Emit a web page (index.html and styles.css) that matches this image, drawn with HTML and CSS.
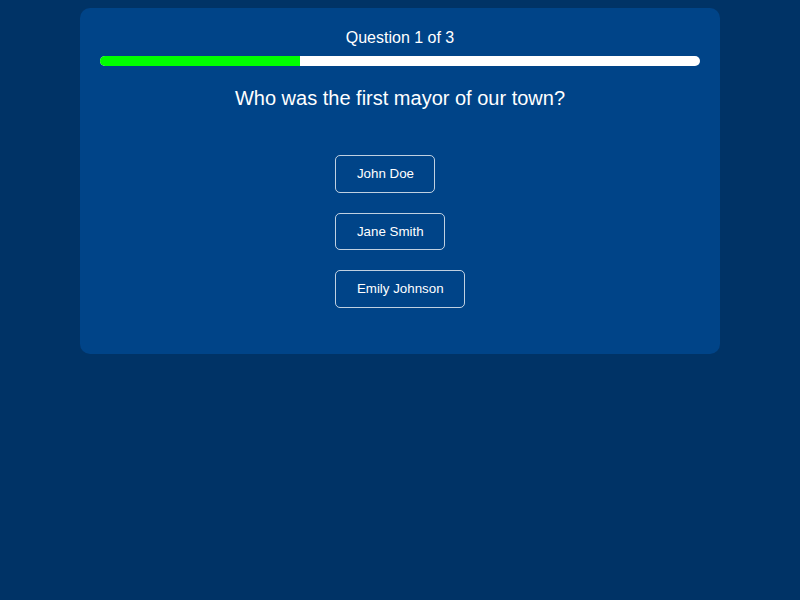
FILE: index.html
```html
<!DOCTYPE html>
<html lang="en">
<head>
<meta charset="utf-8">
<title>Town Quiz</title>
<link rel="stylesheet" href="styles.css">
</head>
<body>
<main class="quiz">
  <div class="counter">Question 1 of 3</div>
  <div class="progress"><div class="progress-fill" style="width: 33.333%"></div></div>
  <h2 class="question">Who was the first mayor of our town?</h2>
  <div class="options-wrap">
    <div class="options">
      <button class="option">John Doe</button>
      <button class="option">Jane Smith</button>
      <button class="option">Emily Johnson</button>
    </div>
  </div>
</main>
</body>
</html>
```
FILE: styles.css
```css
html, body {
  margin: 0;
  padding: 0;
}
body {
  background: #003366;
  font-family: "Liberation Sans", Arial, sans-serif;
  color: #ffffff;
  padding-top: 8px;
}
.quiz {
  width: 600px;
  margin: 0 auto;
  background: #004488;
  border-radius: 10px;
  padding: 20px 20px 46px;
  text-align: center;
}
.counter {
  font-size: 16px;
  line-height: 18px;
  padding-top: 1px;
}
.progress {
  margin-top: 9px;
  height: 10px;
  background: #ffffff;
  border-radius: 5px;
  overflow: hidden;
}
.progress-fill {
  height: 100%;
  background: #00ff00;
}
.question {
  font-size: 20px;
  font-weight: normal;
  line-height: 23px;
  margin: 21px 0 0;
}
.options-wrap {
  margin-top: 45px;
}
.options {
  display: inline-flex;
  flex-direction: column;
  align-items: flex-start;
  gap: 20px;
}
.option {
  font-family: "Liberation Sans", Arial, sans-serif;
  font-size: 13.333px;
  line-height: 15.5px;
  color: #ffffff;
  background: transparent;
  border: 1px solid rgba(255, 255, 255, 0.75);
  border-radius: 5px;
  padding: 10px 20px 10px 20.5px;
  margin: 0;
  cursor: pointer;
}
```
